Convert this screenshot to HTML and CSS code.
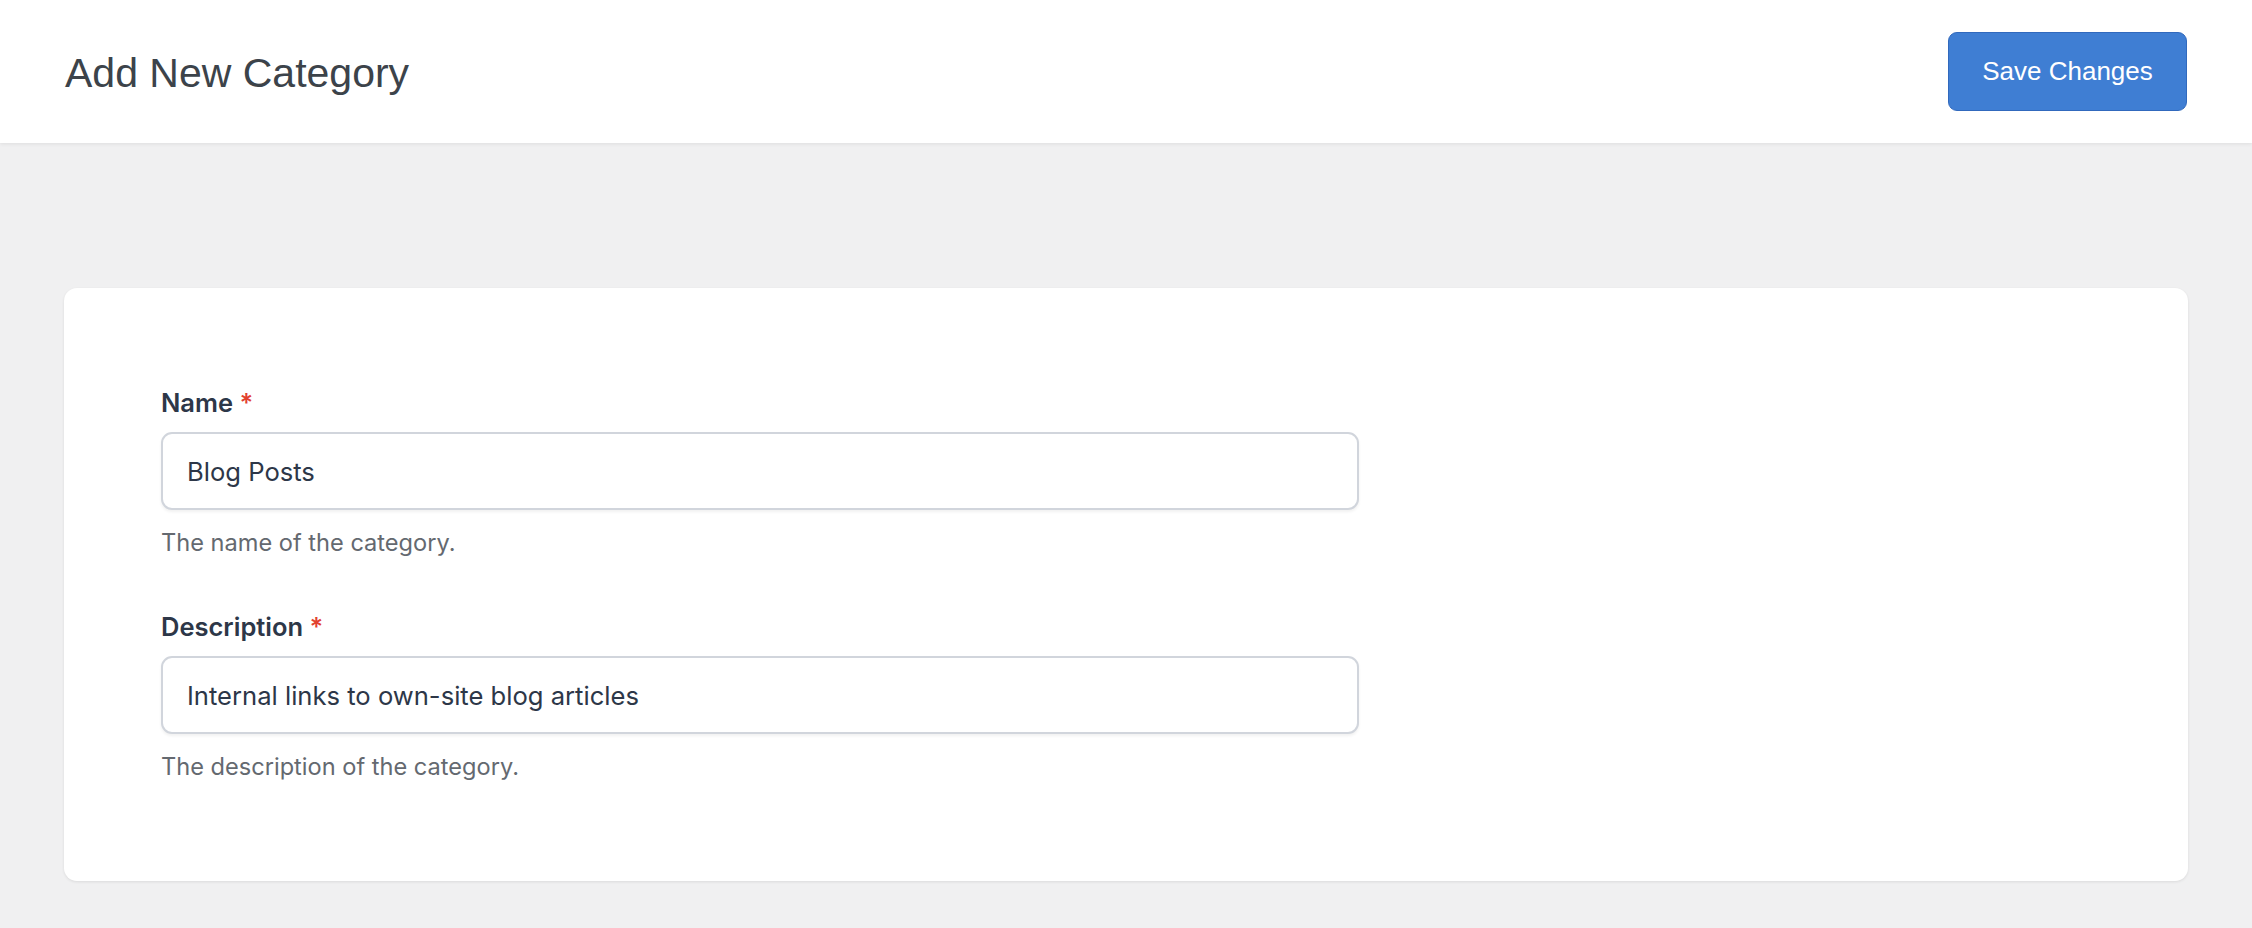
FILE: index.html
```html
<!DOCTYPE html>
<html lang="en">
<head>
<meta charset="utf-8">
<title>Add New Category</title>
<link rel="stylesheet" href="styles.css">
</head>
<body>
<header class="topbar">
  <h1 class="page-title">Add New Category</h1>
  <button class="btn-primary" type="button">Save Changes</button>
</header>
<main class="content">
  <section class="card">
    <div class="field">
      <label class="field-label" for="cat-name">Name <span class="req">*</span></label>
      <input class="field-input" id="cat-name" type="text" value="Blog Posts">
      <p class="field-help">The name of the category.</p>
    </div>
    <div class="field">
      <label class="field-label" for="cat-desc">Description <span class="req">*</span></label>
      <input class="field-input" id="cat-desc" type="text" value="Internal links to own-site blog articles">
      <p class="field-help">The description of the category.</p>
    </div>
  </section>
</main>
</body>
</html>
```

FILE: styles.css
```css
* { box-sizing: border-box; }

html, body {
  margin: 0;
  padding: 0;
}

body {
  background: #f0f0f1;
  font-family: Inter, "Noto Sans", sans-serif;
  min-height: 928px;
}

.topbar {
  height: 143px;
  background: #ffffff;
  display: flex;
  align-items: center;
  justify-content: space-between;
  padding: 0 65px;
  box-shadow: 0 1px 4px rgba(0, 0, 0, 0.08);
  position: relative;
}

.page-title {
  margin: 0;
  padding-top: 4px;
  font-family: "Liberation Sans", Arial, sans-serif;
  font-weight: 400;
  font-size: 41px;
  line-height: 1.15;
  color: #3c434a;
}

.btn-primary {
  height: 79px;
  width: 239px;
  border: 1.5px solid #3169bd;
  border-radius: 9px;
  background: #3f7ed3;
  color: #ffffff;
  font-family: "Liberation Sans", Arial, sans-serif;
  font-size: 26px;
  padding: 0;
  cursor: pointer;
}

.content {
  padding: 145px 64px 49px;
}

.card {
  background: #ffffff;
  border-radius: 13px;
  box-shadow: 0 1px 3px rgba(0, 0, 0, 0.09);
  padding: 99px 97px 98px;
  display: flex;
  flex-direction: column;
  gap: 52px;
}

.field {
  display: flex;
  flex-direction: column;
  max-width: 1198px;
}

.field-label {
  font-size: 25.5px;
  line-height: 32px;
  font-weight: 600;
  color: #2d3748;
  margin-bottom: 13px;
}

.req {
  color: #e2412f;
}

.field-input {
  height: 78px;
  width: 100%;
  border: 2px solid #d1d5dc;
  border-radius: 11px;
  padding: 0 24px;
  font-family: Inter, "Noto Sans", sans-serif;
  font-size: 25.6px;
  color: #2d3748;
  background: #ffffff;
  box-shadow: 0 2px 3px rgba(0, 0, 0, 0.06);
  outline: none;
}

.field-help {
  margin: 17px 0 0;
  font-size: 23.6px;
  line-height: 32px;
  color: #646970;
}
```
